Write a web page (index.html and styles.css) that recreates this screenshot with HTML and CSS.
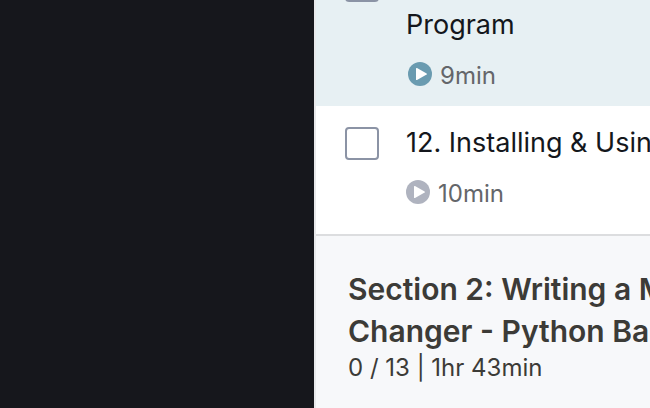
FILE: index.html
```html
<!DOCTYPE html>
<html lang="en">
<head>
<meta charset="utf-8">
<title>Course content</title>
<link rel="stylesheet" href="styles.css">
</head>
<body>
<div class="layout">
  <main class="stage"></main>
  <aside class="sidebar">
    <ul class="lectures">
      <li class="lecture lecture-current">
        <input class="check" type="checkbox" id="lecture-11">
        <div class="body">
          <label class="title" for="lecture-11">Program</label>
          <div class="meta">
            <svg class="play" viewBox="0 0 24 24" aria-hidden="true"><circle cx="12" cy="12" r="12"/><path d="M8 6.6Q8 5.6 9 6.1L18.6 11.4Q19.4 12 18.6 12.6L9 17.9Q8 18.4 8 17.4Z"/></svg>
            <span class="duration">9min</span>
          </div>
        </div>
      </li>
      <li class="lecture">
        <input class="check" type="checkbox" id="lecture-12">
        <div class="body">
          <label class="title" for="lecture-12">12. Installing &amp; Using</label>
          <div class="meta">
            <svg class="play" viewBox="0 0 24 24" aria-hidden="true"><circle cx="12" cy="12" r="12"/><path d="M8 6.6Q8 5.6 9 6.1L18.6 11.4Q19.4 12 18.6 12.6L9 17.9Q8 18.4 8 17.4Z"/></svg>
            <span class="duration">10min</span>
          </div>
        </div>
      </li>
    </ul>
    <section class="section">
      <h2 class="heading">Section 2: Writing a MAC<br>Changer - Python Basics</h2>
      <p class="progress">0 / 13 | 1hr 43min</p>
    </section>
  </aside>
</div>
</body>
</html>
```
FILE: styles.css
```css
* {
  box-sizing: border-box;
}

body {
  margin: 0;
  font-family: Inter, "Liberation Sans", sans-serif;
  color: #14171c;
}

.layout {
  display: grid;
  grid-template-columns: 314px 1fr;
  height: 100vh;
  overflow: hidden;
}

.stage {
  background: #16171c;
}

.sidebar {
  display: flex;
  flex-direction: column;
  min-width: 0;
  overflow: hidden;
  border-left: 2px solid #e8e9eb;
  background: #f7f8fa;
}

/* The list is scrolled so that the current lecture is partly out of view. */
.lectures {
  flex: none;
  margin: -52px 0 0;
  padding: 0;
  list-style: none;
  background: #fff;
  border-bottom: 2px solid #dcdddf;
}

.lecture {
  display: flex;
  gap: 27px;
  padding: 20px 0 30px 29px;
}

.lecture-current {
  height: 158px;
  padding-bottom: 20px;
  background: #e7f0f3;
}

.check {
  appearance: none;
  flex: none;
  width: 34px;
  height: 33px;
  margin: 1px 0 0;
  border: 2px solid #8b93a5;
  border-radius: 4px;
  background: #fff;
}

.body {
  display: flex;
  flex-direction: column;
  gap: 20px;
}

.lecture-current .body {
  justify-content: flex-end;
}

.title {
  font-size: 27px;
  line-height: 34px;
  white-space: nowrap;
}

.meta {
  display: flex;
  gap: 8px;
  height: 24px;
  font-size: 24px;
  line-height: 28px;
  color: #64666a;
}

.play {
  width: 24px;
  height: 24px;
  fill: #afb3bf;
}

.play path {
  fill: #fff;
}

.lecture-current .play {
  fill: #6a9bb0;
}

.lecture-current .meta {
  padding-left: 2px;
}

.section {
  padding: 32px 0 24px 32px;
  color: #3c3b37;
  white-space: nowrap;
}

.heading {
  margin: 0;
  font-size: 30px;
  font-weight: 600;
  line-height: 42px;
}

.progress {
  margin: 0;
  font-size: 24px;
  line-height: 32px;
}
```
